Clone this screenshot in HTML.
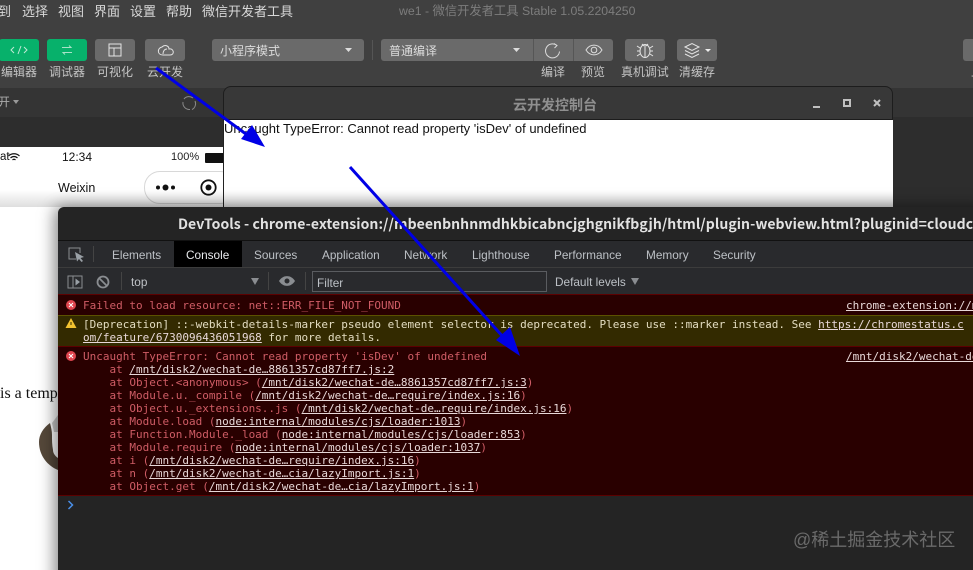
<!DOCTYPE html>
<html><head><meta charset="utf-8">
<style>
html,body{margin:0;padding:0;background:#fff}
#r{position:relative;width:973px;height:570px;overflow:hidden;background:#fff;font-family:"Liberation Sans","Noto Sans CJK SC",sans-serif}
#r div,#r span.a,#r svg{position:absolute}
.t{white-space:pre;line-height:1}
.menu{top:5px;font-size:13px;color:#d8d8d8}
.btn{background:#6a6a6a;border-radius:3px;top:39px;height:22px}
.g{background:#07b16b}
.lab{top:66px;font-size:12px;color:#c4c4c4}
.tab{top:248px;font-size:11.8px;color:#bdc1c6}
.m{font-family:"DejaVu Sans Mono","Liberation Mono",monospace;font-size:11px;line-height:13px;white-space:pre}
.e{color:#cf5c65}
.l{color:#e8d8d8;text-decoration:underline}
</style></head><body><div id="r">

<!-- IDE chrome -->
<div style="left:0;top:0;width:973px;height:88px;background:#404040"></div>
<div style="left:0;top:88px;width:973px;height:29px;background:#343434"></div>
<div style="left:0;top:117px;width:973px;height:30px;background:#2d2d2d"></div>
<div style="left:893px;top:147px;width:80px;height:60px;background:#2d2d2d"></div>

<div class="t menu" style="left:-2px">到</div>
<div class="t menu" style="left:22px">选择</div>
<div class="t menu" style="left:58px">视图</div>
<div class="t menu" style="left:94px">界面</div>
<div class="t menu" style="left:130px">设置</div>
<div class="t menu" style="left:166px">帮助</div>
<div class="t menu" style="left:202px">微信开发者工具</div>
<div class="t" style="left:399px;top:5px;font-size:12.3px;color:#7d7d7d">we1 - 微信开发者工具 Stable 1.05.2204250</div>

<!-- toolbar buttons -->
<div class="btn g" style="left:-1px;width:40px"></div>
<div class="btn g" style="left:47px;width:40px"></div>
<div class="btn" style="left:95px;width:40px"></div>
<div class="btn" style="left:145px;width:40px"></div>
<svg style="left:0;top:39px" width="190" height="22" fill="none" stroke-width="1">
<path d="M14 8l-3 3 3 3M24 8l3 3-3 3M21 7l-3 8" stroke="#bfe9d6"/>
<path d="M62 8.500h9l-2-2M72 13.500H63l2 2" stroke="#a8e2c8"/>
<rect x="109" y="5" width="12" height="12" stroke="#e4e4e4"/><path d="M109 9h12M114 9v8" stroke="#e4e4e4"/>
<path d="M163 16c-6 0-6-7-1-8 3-3 7-1 7 2 5-1 6 6 1 6zM167 10c-3 0-4 3-4 5" stroke="#e4e4e4"/>
</svg>
<div class="t lab" style="left:1px;top:66px">编辑器</div>
<div class="t lab" style="left:49px;top:66px">调试器</div>
<div class="t lab" style="left:97px;top:66px">可视化</div>
<div class="t lab" style="left:147px;top:66px">云开发</div>

<div class="btn" style="left:212px;width:152px"></div>
<div class="t" style="left:220px;top:45px;font-size:12px;color:#dcdcdc">小程序模式</div>
<svg style="left:345px;top:48px" width="8" height="5"><path d="M0 0h7l-3.500 4z" fill="#ddd"/></svg>
<div style="left:372px;top:40px;width:1px;height:20px;background:#555"></div>
<div class="btn" style="left:381px;width:232px"></div>
<div class="t" style="left:389px;top:45px;font-size:12px;color:#dcdcdc">普通编译</div>
<svg style="left:513px;top:48px" width="8" height="5"><path d="M0 0h7l-3.500 4z" fill="#ddd"/></svg>
<div style="left:533px;top:39px;width:1px;height:22px;background:#565656"></div>
<div style="left:573px;top:39px;width:1px;height:22px;background:#565656"></div>
<svg style="left:540px;top:39px" width="90" height="22" fill="none" stroke="#dcdcdc" stroke-width="1">
<path d="M17 6.500a7 7 0 1 0 2.500 6M14 4.500l3 2-2.500 2.500"/>
<path d="M46 11c4-6.500 12-6.500 16 0-4 6.500-12 6.500-16 0z"/><circle cx="54" cy="11" r="2.800"/>
</svg>
<div class="btn" style="left:625px;width:40px"></div>
<svg style="left:625px;top:39px" width="40" height="22" fill="none" stroke="#e4e4e4" stroke-width="1">
<ellipse cx="20" cy="12" rx="5" ry="6.500"/><path d="M20 6v12M17 5l2 2M23 5l-2 2M15 9l-3-2M25 9l3-2M15 12h-3M25 12h3M15 15l-3 2M25 15l3 2"/>
</svg>
<div class="btn" style="left:677px;width:40px"></div>
<svg style="left:677px;top:39px" width="40" height="22" fill="none" stroke="#e4e4e4" stroke-width="1">
<path d="M8 8l7-3.500L22 8l-7 3.500zM8 11.500l7 3.500 7-3.500M8 15l7 3.500 7-3.500"/><path d="M28 10h6l-3 3z" fill="#eee" stroke="none"/>
</svg>
<div class="t lab" style="left:541px;top:66px">编译</div>
<div class="t lab" style="left:581px;top:66px">预览</div>
<div class="t lab" style="left:621px;top:66px;letter-spacing:-.1px">真机调试</div>
<div class="t lab" style="left:679px;top:66px">清缓存</div>
<div class="btn" style="left:963px;width:20px"></div>
<div class="t lab" style="left:971px;top:66px">上</div>

<div class="t" style="left:-2px;top:96px;font-size:12px;color:#aaa">开</div>
<svg style="left:13px;top:100px" width="7" height="5"><path d="M0 0h6l-3 4z" fill="#999"/></svg>
<svg style="left:181px;top:95px" width="16" height="16" fill="none" stroke="#8a8a8a" stroke-width="1"><path d="M3 4a6.500 6.500 0 0 1 9-1M14 6a6.500 6.500 0 0 1-3 8.500M9 14.500A6.500 6.500 0 0 1 2 7"/></svg>

<!-- simulator -->
<div style="left:0;top:147px;width:223px;height:423px;background:#fff"></div>
<div class="t" style="left:0;top:152px;font-size:11.500px;color:#111">at</div>
<svg style="left:8px;top:153px" width="12" height="9" fill="none" stroke="#111" stroke-width="1.200"><path d="M.5 3c3-3 8-3 11 0M2.500 5c2-2 5-2 7 0M4.500 7c1-1 2-1 3 0"/></svg>
<div class="t" style="left:62px;top:151px;font-size:12px;color:#111">12:34</div>
<div class="t" style="left:171px;top:152px;font-size:11px;color:#222">100%</div>
<div style="left:205px;top:153px;width:18px;height:8px;border:1px solid #111;background:#111;border-radius:1px"></div>
<div class="t" style="left:58px;top:182px;font-size:12.500px;color:#111">Weixin</div>
<div style="left:144px;top:171px;width:90px;height:31px;border:1px solid #d8d8d8;border-radius:16px;background:#fff"></div>
<svg style="left:150px;top:176px" width="70" height="24">
<circle cx="8" cy="11.500" r="2" fill="#111"/><circle cx="15.500" cy="11.500" r="3" fill="#111"/><circle cx="23" cy="11.500" r="2" fill="#111"/>
<circle cx="58.500" cy="11.500" r="7.200" fill="none" stroke="#111" stroke-width="1.800"/><circle cx="58.500" cy="11.500" r="3" fill="#111"/>
</svg>
<div class="t" style="left:0;top:386px;font-size:16px;color:#111;font-family:'Liberation Serif',serif">is a temp</div>
<svg style="left:30px;top:410px" width="40" height="70">
<path d="M20 13C13 18 9 25 9 32c0 14 9 24 19 28V48c-3-2-5-5-5-8-1-5-1-10-1-15 0-4-1-8-2-12z" fill="#55483a"/>
<path d="M22 13l6-8v17h-4z" fill="#c8c8c8"/>
</svg>

<!-- cloud window -->
<div style="left:223px;top:86px;width:670px;height:34px;background:#383838;border:1px solid #1d1d1d;border-bottom:0;border-radius:8px 8px 0 0;box-sizing:border-box"></div>
<div class="t" style="left:513px;top:98px;font-size:14px;font-weight:bold;color:#8f8f8f">云开发控制台</div>
<svg style="left:810px;top:96px" width="76" height="16" fill="none" stroke="#c0c0c0" stroke-width="2"><path d="M3 11h7"/><rect x="34" y="4" width="6" height="6"/><path d="M64 4l6 6M70 4l-6 6"/></svg>
<div style="left:223px;top:119px;width:670px;height:1px;background:#1c1c1c"></div>
<div style="left:223px;top:120px;width:670px;height:90px;background:#fff;border-left:1px solid #222;box-sizing:border-box"></div>
<div class="t" style="left:224px;top:122px;font-size:13px;color:#111">Uncaught TypeError: Cannot read property 'isDev' of undefined</div>
<div style="left:0;top:190px;width:893px;height:17px;background:linear-gradient(rgba(0,0,0,0),rgba(0,0,0,.13))"></div>

<!-- devtools -->
<div style="left:58px;top:207px;width:930px;height:380px;background:#242424;border-radius:6px 0 0 0;box-shadow:-3px 0 16px rgba(0,0,0,.5)"></div>
<div class="t" style="left:178px;top:217px;font-size:14px;font-weight:bold;letter-spacing:.06px;color:#e2e2e2;font-family:'Noto Sans CJK SC',sans-serif">DevTools - chrome-extension://mbeenbnhnmdhkbicabncjghgnikfbgjh/html/plugin-webview.html?pluginid=cloudcon</div>
<div style="left:58px;top:240px;width:915px;height:1px;background:#111"></div>
<div style="left:58px;top:241px;width:915px;height:27px;background:#292a2d"></div>
<div style="left:58px;top:267px;width:915px;height:1px;background:#3c3c3c"></div>
<div style="left:174px;top:241px;width:68px;height:26px;background:#000"></div>
<div style="left:93px;top:246px;width:1px;height:16px;background:#444"></div>
<div class="t tab" style="left:112px;top:250px">Elements</div>
<div class="t tab" style="left:186px;top:250px;color:#e8eaed">Console</div>
<div class="t tab" style="left:254px;top:250px">Sources</div>
<div class="t tab" style="left:322px;top:250px">Application</div>
<div class="t tab" style="left:404px;top:250px">Network</div>
<div class="t tab" style="left:472px;top:250px">Lighthouse</div>
<div class="t tab" style="left:554px;top:250px">Performance</div>
<div class="t tab" style="left:646px;top:250px">Memory</div>
<div class="t tab" style="left:713px;top:250px">Security</div>

<div style="left:58px;top:268px;width:915px;height:26px;background:#292a2d"></div>
<svg style="left:66px;top:245px" width="50" height="52" fill="none" stroke="#8a8d91" stroke-width="1">
<path d="M10 14H3V3h11v5"/><path d="M9 7l9 5-3.500 1 2.500 3-1.500 1-2.500-3-2 2.500z" fill="#9aa0a6" stroke="none"/>
<rect x="2" y="31" width="14" height="12"/><path d="M7 31v12"/><path d="M9.500 33.500l4.500 3.500-4.500 3.500z" fill="#9aa0a6" stroke="none"/>
<circle cx="37" cy="37" r="5.500" stroke-width="1.800"/><path d="M33 33l8 8" stroke-width="1.800"/>
</svg>
<div style="left:121px;top:272px;width:1px;height:18px;background:#444"></div>
<div class="t" style="left:131px;top:277px;font-size:11.800px;color:#c0c3c7">top</div>
<svg style="left:251px;top:278px" width="9" height="7"><path d="M0 0h8L4 7z" fill="#8a8d91"/></svg>
<div style="left:268px;top:272px;width:1px;height:18px;background:#444"></div>
<svg style="left:278px;top:275px" width="18" height="12"><path d="M1 6c4-6.500 12-6.500 16 0-4 6.500-12 6.500-16 0z" fill="#8a8d91"/><circle cx="9" cy="6" r="2.500" fill="#292a2d"/></svg>
<div style="left:305px;top:272px;width:1px;height:18px;background:#444"></div>
<div style="left:312px;top:271px;width:235px;height:21px;border:1px solid #5a5c60;box-sizing:border-box"></div>
<div class="t" style="left:317px;top:278px;font-size:11.800px;color:#bdc1c6">Filter</div>
<div class="t" style="left:555px;top:277px;font-size:11.800px;color:#bdc1c6">Default levels</div>
<svg style="left:631px;top:278px" width="9" height="7"><path d="M0 0h8L4 7z" fill="#8a8d91"/></svg>

<!-- console -->
<div style="left:58px;top:294px;width:915px;height:21px;background:#290000;border-top:1px solid #5c0000;box-sizing:border-box"></div>
<div style="left:58px;top:315px;width:915px;height:31px;background:#332a00;border-top:1px solid #5c5200;box-sizing:border-box"></div>
<div style="left:58px;top:346px;width:915px;height:150px;background:#290000;border-top:1px solid #5c0000;border-bottom:1px solid #5c0000;box-sizing:border-box"></div>
<svg style="left:65px;top:298px" width="12" height="68">
<circle cx="6" cy="7" r="5" fill="#e0464f"/><path d="M4 5l4 4M8 5l-4 4" stroke="#fff" stroke-width="1"/>
<path d="M6 20l5.500 10H.500z" fill="#f2c230"/><path d="M6 24v3" stroke="#332a00"/>
<circle cx="6" cy="58" r="5" fill="#e0464f"/><path d="M4 56l4 4M8 56l-4 4" stroke="#fff" stroke-width="1"/>
</svg>
<div class="m e" style="left:83px;top:299px">Failed to load resource: net::ERR_FILE_NOT_FOUND</div>
<div class="m l" style="left:846px;top:299px">chrome-extension://m</div>
<div class="m" style="left:83px;top:318px;color:#e3dcc0">[Deprecation] ::-webkit-details-marker pseudo element selector is deprecated. Please use ::marker instead. See <span class="l">https://chromestatus.c</span></div>
<div class="m" style="left:83px;top:331px;color:#e3dcc0"><span class="l">om/feature/6730096436051968</span> for more details.</div>
<div class="m e" style="left:83px;top:350px">Uncaught TypeError: Cannot read property 'isDev' of undefined</div>
<div class="m l" style="left:846px;top:350px">/mnt/disk2/wechat-de</div>
<div class="m e" style="left:83px;top:363px">    at <span class="l">/mnt/disk2/wechat-de…8861357cd87ff7.js:2</span>
    at Object.&lt;anonymous&gt; (<span class="l">/mnt/disk2/wechat-de…8861357cd87ff7.js:3</span>)
    at Module.u._compile (<span class="l">/mnt/disk2/wechat-de…require/index.js:16</span>)
    at Object.u._extensions..js (<span class="l">/mnt/disk2/wechat-de…require/index.js:16</span>)
    at Module.load (<span class="l">node:internal/modules/cjs/loader:1013</span>)
    at Function.Module._load (<span class="l">node:internal/modules/cjs/loader:853</span>)
    at Module.require (<span class="l">node:internal/modules/cjs/loader:1037</span>)
    at i (<span class="l">/mnt/disk2/wechat-de…require/index.js:16</span>)
    at n (<span class="l">/mnt/disk2/wechat-de…cia/lazyImport.js:1</span>)
    at Object.get (<span class="l">/mnt/disk2/wechat-de…cia/lazyImport.js:1</span>)</div>
<svg style="left:67px;top:500px" width="8" height="10" fill="none" stroke="#4a8fe8" stroke-width="1.500"><path d="M1.500 1l4 4-4 4"/></svg>

<div class="t" style="left:793px;top:531px;font-size:18px;color:#6a6a6a">@稀土掘金技术社区</div>

<!-- annotation arrows -->
<svg style="left:0;top:0" width="973" height="570">
<path d="M156 68L250 137" stroke="#0000e6" stroke-width="3"/>
<path d="M265 147L241 139 252 125z" fill="#0000e6"/>
<path d="M350 167L505 339" stroke="#0000e6" stroke-width="3"/>
<path d="M520 356L496 340 510 327z" fill="#0000e6"/>
</svg>
</div></body></html>
